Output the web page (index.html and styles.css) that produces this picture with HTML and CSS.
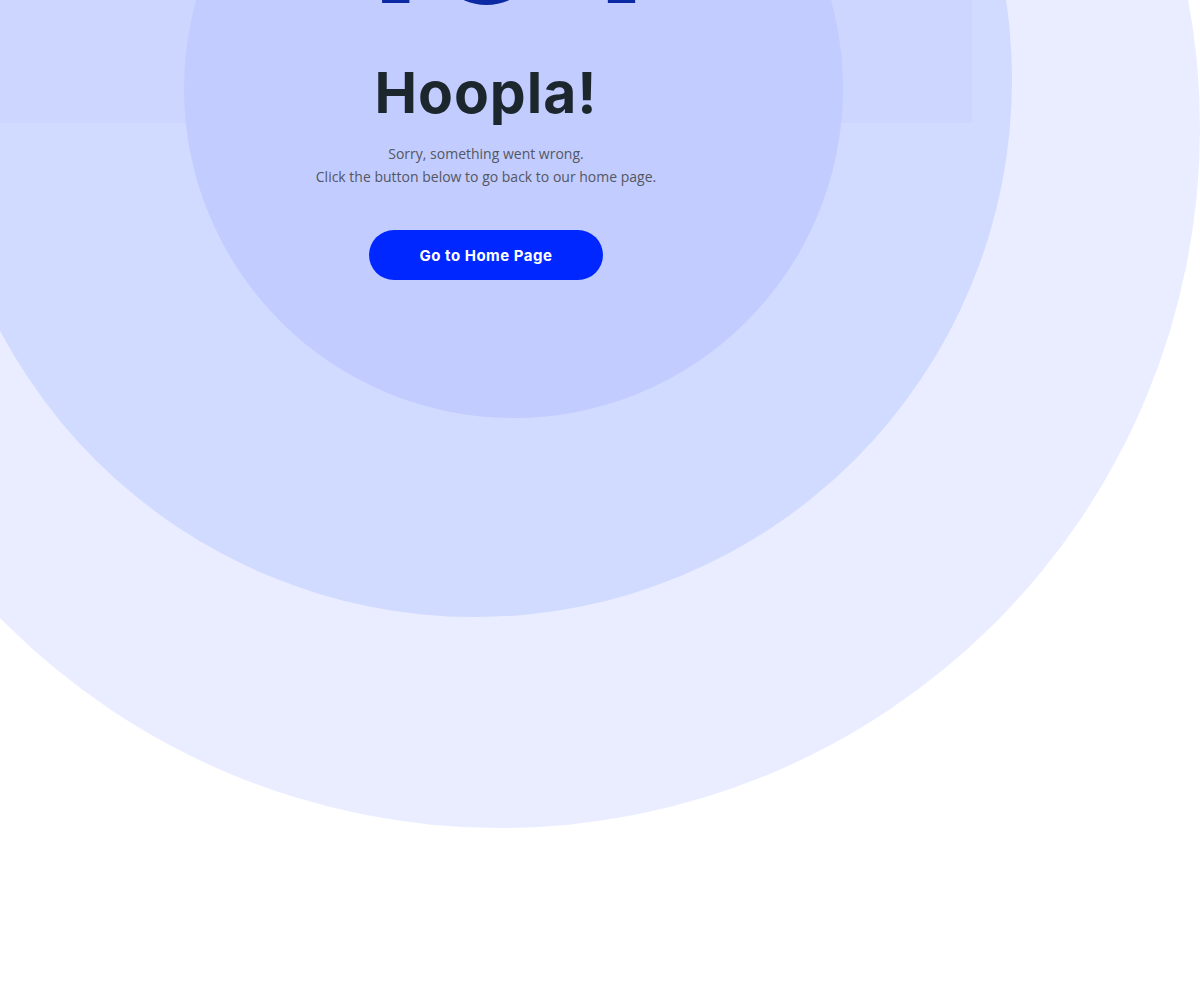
FILE: index.html
```html
<!DOCTYPE html>
<html lang="en">
<head>
<meta charset="utf-8">
<title>Hoopla!</title>
<link rel="stylesheet" href="styles.css">
</head>
<body>
<div class="stage">
  <div class="circle circle-outer"></div>
  <div class="circle circle-middle"></div>
  <div class="band"></div>
  <div class="circle circle-inner"></div>
  <main class="content">
    <div class="code">404</div>
    <h1 class="title">Hoopla!</h1>
    <p class="text">Sorry, something went wrong.<br>Click the button below to go back to our home page.</p>
    <a class="btn" href="#">Go to Home Page</a>
  </main>
</div>
</body>
</html>
```
FILE: styles.css
```css
* { box-sizing: border-box; }
html, body { margin: 0; padding: 0; }
body {
  background: #ffffff;
  overflow: hidden;
  height: 1007px;
  font-family: "Open Sans", "Liberation Sans", sans-serif;
}
.stage {
  position: relative;
  width: 1200px;
  height: 1007px;
  overflow: hidden;
}
.circle {
  position: absolute;
  border-radius: 50%;
}
.circle-outer {
  left: -200px; top: -572px;
  width: 1400px; height: 1400px;
  background: #e9edff;
}
.circle-middle {
  left: -62px; top: -457px;
  width: 1074px; height: 1074px;
  background: #d1daff;
}
.band {
  position: absolute;
  left: 0; top: 0;
  width: 972px; height: 123px;
  background: #cdd6fe;
}
.circle-inner {
  left: 184px; top: -241px;
  width: 659px; height: 659px;
  background: #c2ccff;
}
.content {
  position: relative;
  width: 972px;
  display: flex;
  flex-direction: column;
  align-items: center;
}
.code {
  font-family: Inter, "Liberation Sans", sans-serif;
  font-weight: 800;
  font-size: 165px;
  line-height: 1;
  height: 165px;
  color: #0b2aa3;
  margin-top: -139px;
  letter-spacing: -1px;
}
.title {
  font-family: Inter, "Liberation Sans", sans-serif;
  font-weight: 700;
  font-size: 57px;
  line-height: 70px;
  letter-spacing: 1px;
  color: #1c262d;
  margin: 32px 0 0 0;
}
.text {
  margin: 14px 0 0 0;
  font-size: 14px;
  line-height: 23px;
  color: #54575f;
  text-align: center;
}
.btn {
  margin-top: 42px;
  width: 234px;
  height: 50px;
  border-radius: 25px;
  background: #0027ff;
  color: #ffffff;
  text-decoration: none;
  display: flex;
  align-items: center;
  justify-content: center;
  font-family: Inter, "Liberation Sans", sans-serif;
  font-weight: 700;
  font-size: 15px;
  letter-spacing: 0.5px;
}
```
